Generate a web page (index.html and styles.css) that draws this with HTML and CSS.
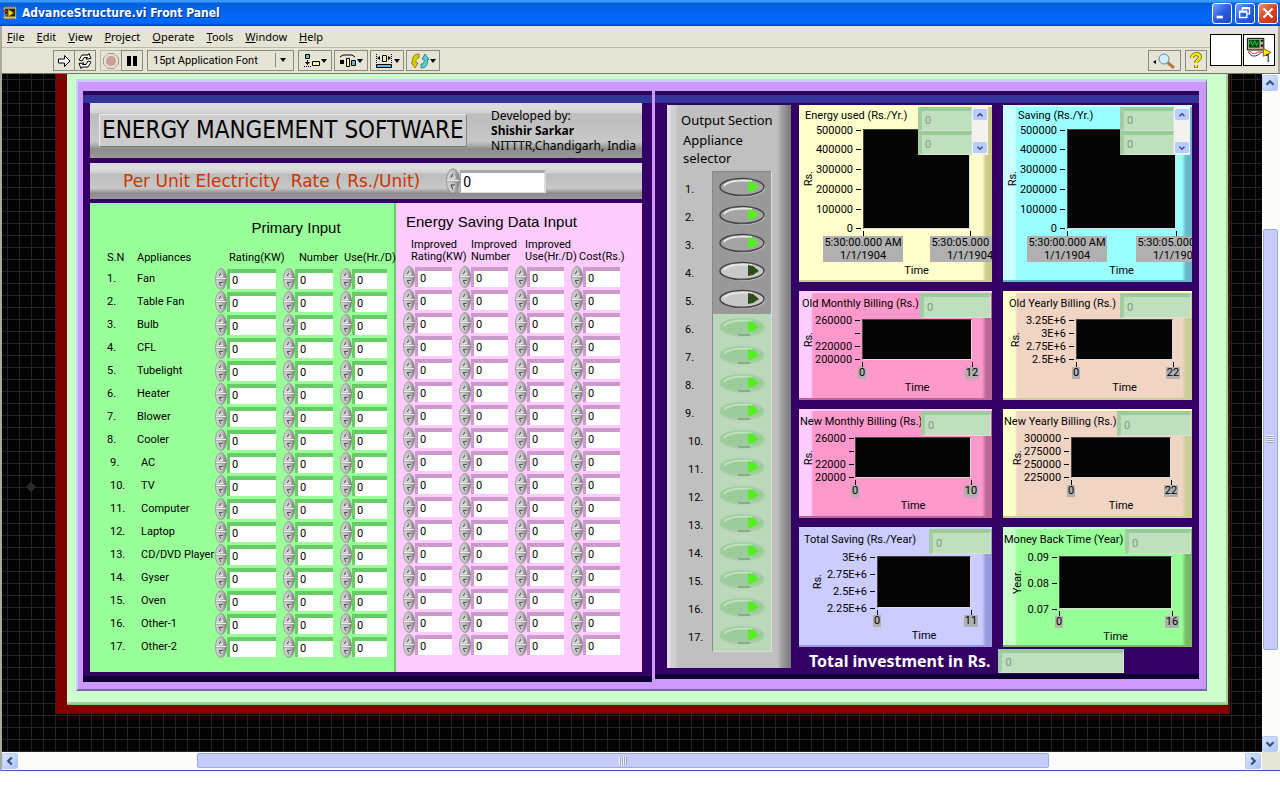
FILE: index.html
```html
<!DOCTYPE html>
<html lang="en">
<head>
<meta charset="utf-8">
<title>AdvanceStructure.vi Front Panel</title>
<link rel="stylesheet" href="styles.css">
</head>
<body>
<header class="titlebar">
  <svg class="app-icon" viewBox="0 0 16 16" aria-hidden="true"><path fill="#e8c860" d="M1 1h14v14H1z"/><path fill="#222" d="M2 3h12v9H2z"/><path fill="#ffe000" stroke="#a80" d="M6 4l6 4-6 4z"/><path stroke="#d22" stroke-width="2" d="M0 6h4"/><path stroke="#28d" stroke-width="2" d="M1 10h4"/><path stroke="#333" stroke-dasharray="1 1" d="M1 1.500h14M1 14.500h14"/></svg>
  <h1>AdvanceStructure.vi Front Panel</h1>
  <div class="window-buttons">
    <button type="button" aria-label="Minimize"><svg viewBox="0 0 20 20"><path stroke="#fff" stroke-width="3" d="M4 14.500h7"/></svg></button>
    <button type="button" aria-label="Restore"><svg viewBox="0 0 20 20"><path fill="none" stroke="#fff" stroke-width="1.500" d="M7 7V4h8v7h-3M4 8h8v7H4zM4 9h8M7 5h8"/></svg></button>
    <button type="button" class="close" aria-label="Close"><svg viewBox="0 0 20 20"><path stroke="#fff" stroke-width="2.500" d="M5 5l10 10M15 5L5 15"/></svg></button>
  </div>
</header>
<div class="chrome">
  <div class="bars">
    <nav class="menu">
      <button type="button"><u>F</u>ile</button><button type="button"><u>E</u>dit</button><button type="button"><u>V</u>iew</button><button type="button"><u>P</u>roject</button><button type="button"><u>O</u>perate</button><button type="button"><u>T</u>ools</button><button type="button"><u>W</u>indow</button><button type="button"><u>H</u>elp</button>
    </nav>
    <div class="toolbar">
      <div class="group">
        <button type="button" aria-label="Run"><svg width="16" height="16" viewBox="0 0 16 16"><path fill="#fff" stroke="#000" d="M2.500 6h6V2.500L14 8l-5.500 5.500V10h-6z"/></svg></button>
        <button type="button" aria-label="Run continuously"><svg width="16" height="16" viewBox="0 0 16 16"><path fill="#fff" stroke="#000" d="M2 7l3-5h6l1-1.500 2 5-5 .5L10.500 4.500H7L5 8zM14 9l-3 5H5l-1 1.500-2-5 5-.5-1.500 1.500H9L11 8z"/></svg></button>
      </div>
      <div class="group">
        <button type="button" class="abort" aria-label="Abort"><svg width="16" height="16" viewBox="0 0 16 16"><path fill="#e8dcd4" stroke="#a09a94" d="M5 .5h6L15.500 5v6L11 15.500H5L.5 11V5z"/><circle cx="8" cy="8" r="5" fill="#c8a09a"/></svg></button>
        <button type="button" aria-label="Pause"><svg width="16" height="16" viewBox="0 0 16 16"><path d="M3 3h4v10H3zM9 3h4v10H9z"/></svg></button>
      </div>
      <label class="font-select"><select aria-label="Text settings"><option>15pt Application Font</option></select></label>
      <button type="button" class="drop" aria-label="Align objects"><svg width="16" height="14" viewBox="0 0 16 14"><path fill="#6bd" stroke="#000" d="M1.500.5h4v4h-4z"/><path fill="#fe9" stroke="#000" d="M8.500 7.500h7v4h-7z"/><path stroke="#000" stroke-dasharray="1 1" d="M0 12.500h8"/><path d="M3 6h1v2h2L3.500 11 1 8h2z"/></svg></button>
      <button type="button" class="drop" aria-label="Distribute objects"><svg width="16" height="14" viewBox="0 0 16 14"><path fill="none" stroke="#000" d="M0 3l3-2h9l3 2"/><path d="M0 6h4v4H0z"/><path fill="#fe9" stroke="#000" d="M6.500 4.500h3v8h-3z"/><path fill="#6bd" stroke="#000" d="M11.500 6.500h4v5h-4z"/></svg></button>
      <button type="button" class="drop" aria-label="Resize objects"><svg width="18" height="14" viewBox="0 0 18 14"><path fill="#fe9" stroke="#000" d="M7.500 1.500h4v6h-4z"/><path fill="#6bd" stroke="#000" d="M1.500 10.500h15v3h-15z"/><path stroke="#000" stroke-dasharray="1 1" d="M1.500 0v9M16.500 0v9"/><path d="M2 4l3-2v4zM16 4l-3-2v4z"/></svg></button>
      <button type="button" class="drop" aria-label="Reorder"><svg width="18" height="16" viewBox="0 0 18 16"><path fill="#dc0" stroke="#770" stroke-width=".8" d="M8 1C3 1 1 4 1.500 9L0 9.500 4 15l3-5-2-.3C4.500 7 5.500 5 8 5z"/><path fill="#5cc" stroke="#277" stroke-width=".8" d="M10 15c5 0 7-3 6.500-8l1.500-.5L14 1l-3 5 2 .3c.5 2.700-.5 4.700-3 4.700z"/></svg></button>
      <span class="spacer"></span>
      <button type="button" class="search" aria-label="Search"><svg width="24" height="16" viewBox="0 0 24 16"><path d="M0 9l3-2v4z"/><path stroke="#b87840" stroke-width="3" d="M14 9l7 6"/><circle cx="11" cy="6" r="5" fill="#cfeeff" stroke="#68a"/></svg></button>
      <button type="button" class="help" aria-label="Context help"><svg width="14" height="17" viewBox="0 0 14 17"><path fill="none" stroke="#660" stroke-width="4" d="M3 6c0-5 8-5 8-1 0 3-4 3-4 6M7 13v3"/><path fill="none" stroke="#fe0" stroke-width="2.500" d="M3 6c0-5 8-5 8-1 0 3-4 3-4 6M7 13v2.500"/></svg></button>
    </div>
  </div>
  <div class="connector"></div>
  <div class="vi-icon"><svg viewBox="0 0 31 31"><path fill="#b8b090" stroke="#000" d="M3.500 3.500h17v12h-17z"/><path fill="#041" d="M5 5h11v8H5z"/><path fill="none" stroke="#0d4" d="M5 10l2-4 2 5 2-5 2 5 2-4"/><circle cx="18.500" cy="6" r="1.200"/><circle cx="18.500" cy="11" r="1.200"/><path fill="none" stroke="#d22" d="M4 18c4-3 4 3 8 1s4-2 8-1"/><path fill="none" stroke="#22c" d="M5 18c2 5 8 5 13 0"/><path fill="#fe0" stroke="#860" d="M20 14l8 4-8 4z"/></svg><span>1</span></div>
</div>
<div class="workspace">
  <main class="canvas">
    <svg class="marker" viewBox="0 0 10 10" aria-hidden="true"><path fill="#2c2c2c" d="M5 0l5 5-5 5-5-5z"/></svg>
    <div class="frame-red"><div class="frame-mint"><div class="frame-lilac">
      <section class="panel inputs">
        <div class="plate head">
          <h2>ENERGY MANGEMENT SOFTWARE</h2>
          <p>Developed by:<br><b>Shishir Sarkar</b><br>NITTTR,Chandigarh, India</p>
        </div>
        <div class="plate rate">
          <label for="rate">Per Unit Electricity&nbsp; Rate ( Rs./Unit)</label>
          <div class="control big"><svg class="spin"><use href="#spin"/></svg><input id="rate" value="0"></div>
        </div>
        <div class="panes">
          <div class="pane green">
            <table>
              <caption>Primary Input</caption>
              <colgroup><col class="c-sn"><col class="c-name"><col class="c-rating"><col class="c-num"><col class="c-use"></colgroup>
              <thead><tr><th>S.N</th><th>Appliances</th><th>Rating(KW)</th><th>Number</th><th>Use(Hr./D)</th></tr></thead>
              <tbody id="primary"></tbody>
            </table>
          </div>
          <div class="pane pink">
            <table>
              <caption>Energy Saving Data Input</caption>
              <thead><tr><th>Improved<br>Rating(KW)</th><th>Improved<br>Number</th><th>Improved<br>Use(Hr./D)</th><th>Cost(Rs.)</th></tr></thead>
              <tbody id="saving"></tbody>
            </table>
          </div>
        </div>
      </section>
      <section class="panel outputs">
        <div class="selector">
          <h2>Output Section</h2>
          <h3>Appliance<br>selector</h3>
          <div class="switches">
            <ol id="numbers"></ol>
            <div class="bank" id="bank"></div>
          </div>
        </div>
        <div class="charts" id="charts"></div>
        <div class="total"><label for="total">Total investment in Rs.</label><input id="total" class="readout" value="0" readonly></div>
      </section>
    </div></div></div>
  </main>
  <div class="scroll vertical">
    <button type="button" aria-label="Scroll up"><svg viewBox="0 0 16 16"><path d="M4 10l4-4 4 4"/></svg></button>
    <span class="before"></span><span class="thumb"></span><span class="after"></span>
    <button type="button" aria-label="Scroll down"><svg viewBox="0 0 16 16"><path d="M4 6l4 4 4-4"/></svg></button>
  </div>
  <div class="scroll horizontal">
    <button type="button" aria-label="Scroll left"><svg viewBox="0 0 16 16"><path d="M10 4L6 8l4 4"/></svg></button>
    <span class="before"></span><span class="thumb"></span><span class="after"></span>
    <button type="button" aria-label="Scroll right"><svg viewBox="0 0 16 16"><path d="M6 4l4 4-4 4"/></svg></button>
  </div>
</div>
<svg class="defs" aria-hidden="true"><defs>
  <linearGradient id="metal"><stop offset="0" stop-color="#d8d8d8"/><stop offset=".6" stop-color="#bbb"/><stop offset="1" stop-color="#777"/></linearGradient>
  <symbol id="spin" viewBox="0 0 12 22"><ellipse cx="6" cy="11" rx="5.500" ry="10.500" fill="url(#metal)" stroke="#888" stroke-width=".7"/><path stroke="#eee" d="M1 10.500h10"/><path stroke="#999" stroke-width=".6" d="M1 11.500h10"/><path fill="none" stroke="#eee" stroke-width=".8" d="M6 5l2 3.500H4M8 14.500l-2 3.500"/><path fill="none" stroke="#444" stroke-width=".9" d="M4.200 8L6 5M4.200 14.500h3.600M4.200 14.500L6 18"/></symbol>
</defs></svg>
<script src="app.js"></script>
</body>
</html>
```
FILE: styles.css
```css
* { box-sizing: border-box; }
body { margin: 0; background: #fff; color: #000; font: 11px/13px Roboto, "Noto Sans", sans-serif; }
button, input, select { font: inherit; color: inherit; margin: 0; padding: 0; border: 0; background: none; border-radius: 0; }
h1, h2, h3, p, ol { margin: 0; padding: 0; font-size: inherit; font-weight: 400; list-style: none; }
.defs { position: absolute; width: 0; height: 0; }

.titlebar { display: flex; align-items: center; height: 26px; padding: 0 2px 0 3px; background: linear-gradient(#3a9bff 0 2px, #0560d8 3px, #0364ee 12px, #0068ff 23px, #0040b8); color: #fff; }
.app-icon { width: 14px; height: 14px; }
.titlebar h1 { flex: 1; margin-left: 5px; font: bold 12px/16px "DejaVu Sans Condensed", "Noto Sans", sans-serif; text-shadow: 1px 1px #003090; }
.window-buttons { display: flex; gap: 3px; }
.window-buttons button { width: 20px; height: 21px; border: 1px solid #fff; border-radius: 3px; background: linear-gradient(135deg, #7aa0f8, #2a5ce0 50%, #1c4ccc); }
.window-buttons .close { background: linear-gradient(135deg, #f09070, #d84420 50%, #c03010); }
.window-buttons svg { display: block; width: 100%; }

.chrome { display: flex; height: 48px; background: #e6e4d4; border-left: 2px solid #aaa89c; border-right: 2px solid #aaa89c; border-bottom: 1px solid #77756a; }
.bars { flex: 1; }
.menu { display: flex; align-items: center; gap: 12px; height: 22px; padding-left: 5px; border-bottom: 1px solid #bbb9aa; font-family: "Noto Sans", sans-serif; }
.toolbar { display: flex; align-items: center; height: 25px; padding-left: 51px; gap: 4px; }
.toolbar button { height: 21px; border: 1px solid #8c8a7e; display: flex; align-items: center; justify-content: center; }
.group { display: flex; }
.group button { width: 22px; }
.group button + button { margin-left: -1px; }
.group .abort { border-color: #bbb9aa; }
.font-select { position: relative; }
.font-select select { width: 147px; height: 21px; padding-left: 5px; border: 1px solid #8c8a7e; appearance: none; }
.font-select::after { content: ""; position: absolute; right: 8px; top: 8px; border: 3px solid transparent; border-top: 4px solid #000; border-bottom: 0; }
.font-select::before { content: ""; position: absolute; right: 18px; top: 3px; height: 14px; border-left: 1px solid #8c8a7e; }
.toolbar .drop { width: 34px; gap: 1px; margin-right: -2px; }
.drop::after { content: ""; border: 3px solid transparent; border-top: 4px solid #000; border-bottom: 0; }
.spacer { flex: 1; }
.toolbar .search { width: 33px; }
.toolbar .help { width: 22px; margin-right: 3px; }
.connector, .vi-icon { width: 32px; height: 32px; margin: 8px 1px 0 0; background: #fff; border: 1px solid #000; }
.vi-icon { position: relative; margin-right: 3px; }
.vi-icon svg { width: 30px; height: 30px; }
.vi-icon span { position: absolute; right: 3px; bottom: 0; line-height: 12px; }

.workspace { display: grid; grid-template-columns: 1fr 18px; border-left: 2px solid #aaa89c; border-bottom: 1px solid #3a5cb0; background: #e8e6d8; }
.canvas { position: relative; padding: 0 32px 38px 54px; background: repeating-linear-gradient(to right, transparent 0 5px, #242424 5px 6px, transparent 6px 12px), repeating-linear-gradient(#030303 0 5px, #242424 5px 6px, #030303 6px 12px); }
.marker { position: absolute; left: 24px; top: 408px; width: 10px; height: 10px; }
.frame-red { border: solid #800000; border-width: 0 2px 9px 11px; border-right-color: #4a1810; }
.frame-mint { padding: 5px 21px 13px 9px; background: #ccffcc; border-bottom: 1px solid #88bb88; box-shadow: inset -2px -2px #a0cfa0; }
.frame-lilac { display: grid; grid-template-columns: 569fr 544fr; align-items: start; gap: 3px; padding: 9px 7px 7px 5px; background: #cc99ff; border: 2px solid #ccccff; border-top-width: 3px; border-right: 1px solid #7766a8; border-bottom: 2px solid #7766a8; }
.panel { background: #330066; border-top: 4px solid #2a0058; border-bottom: 6px solid #0c0030; box-shadow: inset 0 8px #333399; }
.inputs { padding: 8px 10px 4px 7px; }

.plate { display: flex; align-items: center; background: linear-gradient(#dcdcdc 0 6px, #cfcfcf 10px, #bcbcbc 11px, #c8c8c8 70%, #8c8c8c 84%, #999); }
.head { height: 55px; padding: 0 6px 0 9px; justify-content: space-between; }
.head h2 { font: 24px/31px "DejaVu Sans Condensed", "Noto Sans", sans-serif; padding: 0 2px; border: 1px solid #eee; border-right-color: #888; border-bottom-color: #777; background: #ccc; white-space: nowrap; }
.head p { font-family: "Noto Sans", sans-serif; font-size: 12px; line-height: 15px; white-space: nowrap; }
.rate { height: 36px; margin: 5px 0 4px; padding-left: 33px; gap: 26px; }
.rate label { font: 17px/20px "DejaVu Sans", sans-serif; color: #cc3300; white-space: nowrap; }
.panes { display: grid; grid-template-columns: 306fr 246fr; height: 469px; }
.pane.green { background: #99ff99; border-right: 2px solid #66cc66; --shade: #66cc66; }
.pane.pink { background: #ffccff; padding: 0 15px 0 7px; --shade: #cc99cc; }
table { width: 100%; border-collapse: collapse; table-layout: fixed; }
caption { font: 15px/20px "Liberation Sans", sans-serif; }
.green caption { padding: 15px 0 3px 108px; }
.pink caption { padding: 9px 0 5px 3px; text-align: left; white-space: nowrap; }
th, td { padding: 0; font-weight: 400; text-align: left; white-space: nowrap; }
thead tr { height: 26px; }
.green thead th { padding-top: 6px; }
.pink thead tr { height: 28px; line-height: 12px; vertical-align: top; }
.pink thead th { padding: 2px 0 0 8px; }
.pink thead th:nth-child(2) { padding-left: 12px; }
.pink thead th:nth-child(3) { padding-left: 10px; }
.pink thead th:last-child { padding-top: 14px; }
.green th:nth-child(1), .green td:nth-child(1) { padding-left: 17px; }
.green th:nth-child(3) { padding-left: 14px; }
.green th:nth-child(4) { padding-left: 16px; }
.green th:nth-child(5) { padding-left: 4px; }
.c-sn { width: 47px; }
.c-name { width: 78px; }
.c-rating { width: 68px; }
.c-num { width: 57px; }
.c-use { width: 54px; }
tbody tr { height: 23px; }
.green .shift td:nth-child(1) { padding-left: 20px; }
.green .shift td:nth-child(2) { padding-left: 4px; }
.control { display: flex; align-items: center; height: 23px; padding-right: 7px; }
.spin { flex: none; width: 12px; height: 22px; }
.control input { flex: 1; min-width: 0; width: 0; height: 20px; padding: 0 0 1px 2px; background: #fff; border-top: 4px solid var(--shade); border-left: 3px solid var(--shade); }
.control.big { padding: 0; height: 28px; }
.big .spin { width: 14px; height: 28px; }
.control.big input { flex: none; width: 86px; height: 23px; border: solid #aaa; border-width: 3px 2px 1px 1px; border-right-color: #ddd; border-bottom-color: #ddd; font-size: 14px; }

.outputs { display: grid; grid-template-columns: 124px 1fr; column-gap: 8px; padding: 10px 7px 0 12px; border-bottom-width: 5px; }
.selector { grid-row: 1 / 3; height: 563px; padding: 7px 14px 0; background: linear-gradient(to right, #e0e0e0 0 3px, #d0d0d0 4px 8px, #c0c0c0 11px calc(100% - 14px), #999 calc(100% - 8px), #777); }
.selector h2, .selector h3 { font-family: "Noto Sans", sans-serif; font-size: 13px; line-height: 16px; white-space: nowrap; }
.selector h3 { line-height: 18px; margin: 3px 0 4px 2px; }
.switches { display: flex; justify-content: space-between; padding: 0 5px 0 4px; }
#numbers { padding-top: 5px; }
#numbers li { height: 28px; line-height: 28px; }
#numbers li:nth-child(n+10) { padding-left: 3px; }
.bank { width: 60px; padding: 1px 2px 2px; border: 1px solid #888; border-right-color: #ddd; border-bottom-color: #ddd; background: linear-gradient(#999 0 142px, #bbd8bb 142px); }
.bank button { display: block; width: 100%; height: 28px; }
.bank svg { display: block; margin: auto; }
.charts { display: grid; grid-template-columns: 193fr 189fr; grid-template-rows: 177px 109px 109px 120px; column-gap: 11px; row-gap: 9px; }
.chart { position: relative; overflow: hidden; background: linear-gradient(to right, var(--light) 0 12px, var(--base) 14px calc(100% - 10px), var(--dark) calc(100% - 6px)); box-shadow: inset 0 2px var(--light), inset 0 -2px var(--dark); padding-right: var(--right); }
.yellow { --base: #ffffcc; --light: #ffffcc; --dark: #cccc88; }
.cyan { --base: #99ffff; --light: #ccffff; --dark: #66b8c8; }
.rose { --base: #ff99cc; --light: #ffccff; --dark: #bb6699; }
.peach { --base: #f0d5c5; --light: #ffffcc; --dark: #cccc99; }
.lavender { --base: #ccccff; --light: #ccccff; --dark: #9999dd; }
.lime { --base: #99ff99; --light: #ccffcc; --dark: #77bb66; }
.chart h3 { padding: 6px 0 0 4px; line-height: 14px; white-space: nowrap; }
.chart.tall h3 { padding-top: 4px; }
.body { display: grid; grid-template-columns: var(--axis) 1fr; }
.yaxis { position: relative; display: flex; align-items: center; justify-content: space-between; padding-left: var(--ypad, 3px); }
.ylabel { writing-mode: vertical-rl; transform: rotate(180deg); }
.ticks { height: 100%; display: flex; flex-direction: column; justify-content: space-between; align-items: flex-end; padding: 1px 2px 0 0; }
.ticks li { display: flex; align-items: center; height: 0; gap: 3px; }
.ticks li::after { content: ""; width: 5px; border-top: 1px solid #000; }
.plot { height: var(--plot); background: #050505; border: 1px solid #444; border-right-color: #ddd; border-bottom-color: #ddd; }
.xaxis { grid-column: 2; display: flex; justify-content: space-between; padding-top: 2px; }
.xaxis > span { width: 0; display: flex; flex-direction: column; align-items: center; white-space: nowrap; text-align: center; line-height: 13px; }
.xaxis > span::before { content: ""; width: 1px; height: 5px; background: #000; }
.xaxis b { font-weight: 400; background: #b0b0b0; padding: 0 1px; line-height: 12px; }
.tall .xaxis b { line-height: 13px; }
.time { grid-column: 2; text-align: center; line-height: 14px; padding-top: 2px; }
.readout { color: #7f997f; background: #bfdfbf; border: solid #99cc99; border-width: 4px 1px 1px 4px; border-left-color: #a4cda4; border-right-color: #d0e8d0; border-bottom-color: #d0e8d0; padding-left: 3px; }
.chart > .readout { position: absolute; right: 1px; top: 2px; height: 25px; width: var(--box); }
.array { position: absolute; right: var(--ar, 4px); top: 2px; display: flex; }
.array .cells { display: flex; flex-direction: column; width: 54px; }
.array .readout { width: 100%; height: 24px; }
.mini { display: flex; flex-direction: column; justify-content: space-between; width: 16px; background: #f4f2ee; padding: 2px 1px; }
.mini button { height: 11px; display: flex; border-radius: 2px; background: #b8ccff; }
.mini svg { margin: auto; width: 10px; height: 10px; }
.total { grid-column: 2; display: flex; align-items: center; gap: 8px; height: 27px; padding: 1px 0 0 10px; }
.total label { font: bold 16px/20px "Noto Sans", sans-serif; color: #fff; white-space: nowrap; }
.total input { width: 126px; height: 24px; }

.scroll { display: flex; background: #fcfcfa; }
.scroll button { flex: none; width: 16px; height: 16px; border-radius: 2px; background: linear-gradient(135deg, #dbe6ff, #aac4f8); border: 1px solid #b8ccf4; }
.scroll svg, .mini svg { display: block; fill: none; stroke: #35527f; stroke-width: 2.500px; }
.vertical { flex-direction: column; padding: 1px 2px 0 0; align-items: center; }
.thumb { background: #c8ccfa; border: 1px solid #94b0dc; border-radius: 2px; position: relative; }
.thumb::after { content: ""; position: absolute; inset: 0; margin: auto; width: 8px; height: 8px; background: repeating-linear-gradient(to right, #eef 0 1px, #9ab 1px 2px); }
.vertical .thumb::after { background: repeating-linear-gradient(#eef 0 1px, #9ab 1px 2px); }
.vertical .thumb { width: 15px; flex: 420; }
.vertical .before { flex: 138; }
.vertical .after { flex: 86; }
.horizontal { height: 18px; padding: 1px 1px 0 0; }
.horizontal .thumb { height: 15px; flex: 852; }
.horizontal .before { flex: 179; }
.horizontal .after { flex: 196; }
```
FILE: app.js
```js
const appliances = ['Fan', 'Table Fan', 'Bulb', 'CFL', 'Tubelight', 'Heater', 'Blower', 'Cooler', 'AC', 'TV', 'Computer', 'Laptop', 'CD/DVD Player', 'Gyser', 'Oven', 'Other-1', 'Other-2'];

const field = (name, label) =>
  `<td><div class="control"><svg class="spin"><use href="#spin"/></svg><input value="0" aria-label="${name} ${label}"></div></td>`;

document.getElementById('primary').innerHTML = appliances.map((name, i) =>
  `<tr class="${i > 7 ? 'shift' : ''}"><td>${i + 1}.</td><td>${name}</td>` +
  ['rating', 'number', 'use'].map(l => field(name, l)).join('') + '</tr>').join('');

document.getElementById('saving').innerHTML = appliances.map(name =>
  '<tr>' + ['improved rating', 'improved number', 'improved use', 'cost'].map(l => field(name, l)).join('') + '</tr>').join('');

document.getElementById('numbers').innerHTML = appliances.map((_, i) => `<li>${i + 1}.</li>`).join('');

document.getElementById('bank').innerHTML = appliances.map((name, i) => {
  const enabled = i < 5;
  const on = i !== 3 && i !== 4;
  const face = enabled ? (on ? '#a4a4a4' : '#c8c8c8') : '#9ccc9c';
  const rim = enabled ? '#444' : '#a6cfa6';
  const glow = on ? '#55ee22' : '#2c4c1c';
  return `<button type="button" aria-label="${name}" aria-pressed="${on}" ${enabled ? '' : 'disabled'}>
    <svg width="48" height="22" viewBox="0 0 48 22"><ellipse cx="25" cy="12" rx="22" ry="9" fill="${enabled ? '#ccc' : '#b0d8b0'}"/>
    <ellipse cx="24" cy="11" rx="22" ry="8.500" fill="${face}" stroke="${rim}" stroke-width="1.500"/>
    <path d="M6 10c4-6 20-6 28-5" fill="none" stroke="${enabled ? '#e8e8e8' : '#bfe4bf'}" stroke-width="2"/>
    <path d="M20 19h12" stroke="#666" stroke-width=".7"/>
    <path d="M30 5l5 1 6 5-6 4-5 1z" fill="${glow}"/></svg></button>`;
}).join('');

const stamps = ['5:30:00.000 AM<br>1/1/1904', '5:30:05.000 AM<br>1/1/1904'];
const thousands = ['500000', '400000', '300000', '200000', '100000', '0'];
const charts = [
  { c: 'yellow tall', t: 'Energy used (Rs./Yr.)', y: thousands, x: stamps, axis: 64, right: 22, plot: 100, top: 24, array: 4, pad: 6 },
  { c: 'cyan tall', t: 'Saving (Rs./Yr.)', y: thousands, x: stamps, axis: 64, right: 16, plot: 100, top: 24, array: 2, pad: 15 },
  { c: 'rose', t: 'Old Monthly Billing (Rs.)', y: ['260000', '', '220000', '200000'], x: [0, 12], axis: 63, right: 20, plot: 41, top: 28, box: 71, pad: 3 },
  { c: 'peach', t: 'Old Yearly Billing (Rs.)', y: ['3.25E+6', '3E+6', '2.75E+6', '2.5E+6'], x: [0, 22], axis: 73, right: 19, plot: 41, top: 28, box: 71, pad: 6, ypad: 6 },
  { c: 'rose', t: 'New Monthly Billing (Rs.)', y: ['26000', '', '22000', '20000'], x: [0, 10], axis: 56, right: 21, plot: 41, top: 28, box: 70, pad: 1 },
  { c: 'peach', t: 'New Yearly Billing (Rs.)', y: ['300000', '275000', '250000', '225000'], x: [0, 22], axis: 68, right: 21, plot: 41, top: 28, box: 74, pad: 1, ypad: 8 },
  { c: 'lavender', t: 'Total Saving (Rs./Year)', y: ['3E+6', '2.75E+6', '2.5E+6', '2.25E+6'], x: [0, 11], axis: 78, right: 21, plot: 52, top: 29, box: 62, ypad: 12 },
  { c: 'lime', t: 'Money Back Time (Year)', y: ['0.09', '0.08', '0.07'], x: [0, 16], axis: 56, right: 20, plot: 53, top: 29, box: 66, pad: 1, ypad: 8, unit: 'Year.' },
];

const arrow = d => `<button type="button" aria-label="Scroll"><svg viewBox="0 0 16 16"><path d="${d}"/></svg></button>`;

document.getElementById('charts').innerHTML = charts.map(k => {
  const box = 'array' in k
    ? `<div class="array"><div class="cells"><input class="readout" value="0" readonly aria-label="${k.t} 1"><input class="readout" value="0" readonly aria-label="${k.t} 2"></div><div class="mini">${arrow('M4 10l4-4 4 4')}${arrow('M4 6l4 4 4-4')}</div></div>`
    : `<input class="readout" value="0" readonly aria-label="${k.t}">`;
  return `<article class="chart ${k.c}" style="--axis:${k.axis}px;--right:${k.right}px;--plot:${k.plot}px;--box:${k.box || 0}px;--ar:${k.array || 0}px;--ypad:${k.ypad || 3}px">
    <h3 style="height:${k.top}px;padding-left:${k.pad || 5}px">${k.t}</h3>
    <div class="body"><div class="yaxis"><span class="ylabel">${k.unit || 'Rs.'}</span><ol class="ticks">${k.y.map(v => `<li>${v}</li>`).join('')}</ol></div>
    <div class="plot"></div><div class="xaxis">${k.x.map(v => `<span><b>${v}</b></span>`).join('')}</div><div class="time">Time</div></div>
    ${box}</article>`;
}).join('');
```
